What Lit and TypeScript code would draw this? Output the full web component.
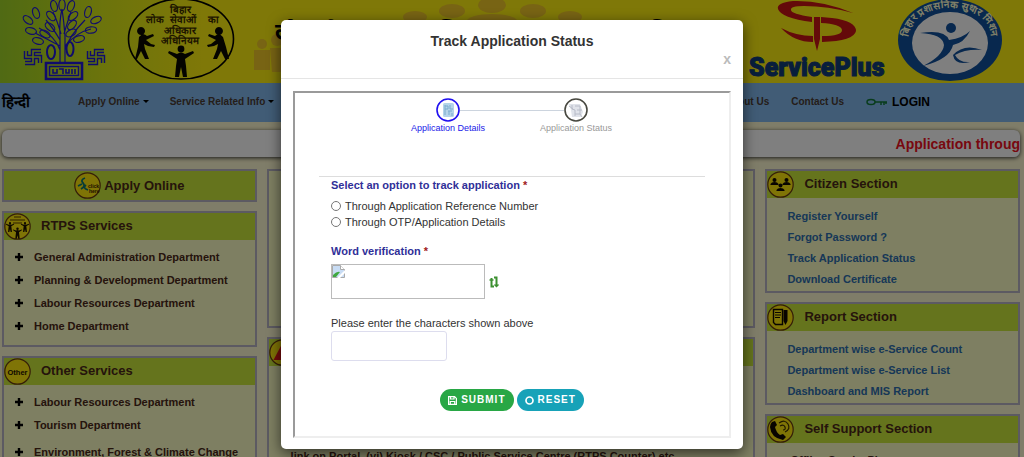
import { LitElement, html, css, svg } from "lit";
import { customElement } from "lit/decorators.js";

const leaf = (x: number, y: number, a: number) => svg`<ellipse cx=${x} cy=${y} rx="3.200" ry="5.600" transform=${`rotate(${a} ${x} ${y})`} />`;
const knot = "M5 51v6h14v6M20 51h-8v12H4M68 51v6h14v6M83 51h-8v12h-8";

const emblem = html`<svg class="emblem" viewBox="0 0 84 81" fill="none" stroke="#2018d8" stroke-width="1.200">
  <path d="M39 62V36Q38 22 41 9M44 62V36Q43 22 41 9M39 50Q34 36 18 28M39 46Q28 40 14 33M39 40Q32 28 25 20M44 50Q48 36 64 20M44 46Q56 32 70 29M40 34Q36 20 32 12M43 34Q47 20 50 12" />
  ${leaf(41, 5, 0)}${leaf(33, 6, -15)}${leaf(50, 6, 20)}${leaf(30, 16, -40)}${leaf(52, 16, 50)}
  ${leaf(15, 13, -20)}${leaf(67, 12, 15)}${leaf(7, 20, -50)}${leaf(75, 20, 65)}${leaf(10, 31, -75)}${leaf(70, 30, 85)}
  ${leaf(29, 27, -50)}${leaf(51, 25, 40)}${leaf(24, 34, -60)}${leaf(58, 39, 75)}${leaf(17, 41, -75)}${leaf(50, 33, 60)}
  <g stroke-width="2"><ellipse cx="30" cy="52" rx="4" ry="7" /><ellipse cx="49" cy="49" rx="3.500" ry="7" /></g>
  <path stroke-width="4.400" d=${knot} /><path stroke="#b4dc20" stroke-width="1.600" d=${knot} />
  <path stroke-width="2.600" d="M25 63h36v16H25z" /><path stroke-width="1.500" d="M28.500 66.500h29v9h-29z" /><path stroke-width="1.600" d="M32 69v4h4v-4M38 69h4v5M45 69v4h3v-4M51 69v5M54 69v5" />
</svg>`;

const figure = (x: number, y: number) => svg`<g transform=${`translate(${x} ${y})`}><circle r="3.400" cy="-12" /><path d="M-4-7Q0-10 4-7L12-10 13-8 4-2 5 5 6 16H2L0 6-2 16H-6L-5 5-4-2-13-8-12-10Z" /></g>`;

const rtpsLogo = html`<svg class="rtps" viewBox="0 0 108 84">
  <ellipse cx="54" cy="39" rx="52.500" ry="40" fill="none" stroke="#000" stroke-width="1.600" />
  <g fill="#3a2a00" font-size="10" font-weight="700" text-anchor="middle"><text x="53" y="13">बिहार</text><text x="19" y="23" text-anchor="start">लोक</text><text x="56" y="23">सेवाओं</text><text x="86" y="23">का</text><text x="53" y="34">अधिकार</text><text x="53" y="44">अधिनियम</text></g>
  <g fill="#0a0800"><path d="M14 35a4 4 0 1 1 .1 0M12 37q4-5 8-1l6-2 1 2-8 4 5 4 4 1-1 2-6-1-4-2 1 5 4 10h-4l-4-8-4 8H8l3-12z" /><path d="M92 35a4 4 0 1 0-.1 0M96 37q-4-5-8-1l-6-2-1 2 8 4-5 4-4 1 1 2 6-1 4-2-1 5-4 10h4l4-8 4 8h4l-3-12z" />${figure(54, 61)}</g>
</svg>`;

const spLogo = html`<svg class="sp" viewBox="0 0 142 80">
  <g fill="#c81414"><path d="M105 13Q74 0 45 1Q28 3 30 9Q33 18 64 22V17Q43 14 43 10Q42 6 56 6Q80 6 105 13Z" /><path d="M73 17L84 18Q108 21 108 31Q106 41 74 42V36Q94 36 94 30Q93 24 73 23Z" /><path d="M33 28Q48 36 65 36V42Q46 42 33 28ZM66 17h6v22l-3 12-3-12z" /></g>
  <text x="1" y="76" class="sptext">ServicePlus</text>
</svg>`;

const missionLogo = html`<svg class="mission" viewBox="0 0 106 82">
  <ellipse cx="53" cy="40" rx="52" ry="41" fill="#10509c" /><ellipse cx="53" cy="43" rx="38" ry="31" fill="#fff" />
  <path id="arc" d="M12 47C7 18 33 8 53 8S99 18 94 47" fill="none" />
  <text fill="#ffffd0" font-size="10" font-weight="700" text-anchor="middle"><textPath href="#arc" startOffset="50%">बिहार प्रशासनिक सुधार मिशन</textPath></text>
  <circle cx="54" cy="28" r="5" fill="#10509c" />
  <path fill="#10509c" d="M23 33Q48 29 52 40Q66 38 73 31Q67 43 56 45Q53 59 26 66Q46 56 47 45Q46 34 23 33ZM56 55Q67 43 85 50Q68 49 58 55Q62 63 73 62Q58 66 56 55Z" />
</svg>`;

const icons: Record<string, unknown> = {
  apply: svg`<path fill="none" stroke="#0c7870" stroke-width="1.800" d="M11 6q-5 2-2 5t-2 6M8 12l-4 2M12 13q-4 3 2 5"/><g fill="#402000" font-size="5" font-weight="700"><text x="14" y="16">click</text><text x="15" y="21">here</text></g>`,
  rtps: svg`<g fill="#1c1000"><g transform="translate(6 14) scale(.32)">${figure(0, 0)}</g><g transform="translate(21 14) scale(.32)">${figure(0, 0)}</g><g transform="translate(13.500 20) scale(.36)">${figure(0, 0)}</g></g><path d="M10 4h7M6 7h15M9 10h9" stroke="#5a3c00" stroke-width="1.200"/>`,
  other: svg`<text x="13.500" y="16.500" text-anchor="middle" font-size="7.500" font-weight="700" fill="#1c1000">Other</text>`,
  people: svg`<g fill="#100800"><circle cx="7.500" cy="9" r="2"/><path d="M3.500 14v-1q1-2 4-2t4 2v1z"/><circle cx="19.500" cy="9" r="2"/><path d="M15.500 14v-1q1-2 4-2t4 2v1z"/><circle cx="13.500" cy="14.500" r="2"/><path d="M9.500 20v-1q1-2 4-2t4 2v1z"/></g>`,
  report: svg`<path d="M6.500 5.500h9v15h-7l-2-2z" fill="none" stroke="#100800" stroke-width="1.400"/><path d="M8 8.500h6M8 11h6M8 13.500h5" stroke="#100800"/><path d="M16.500 6h4v11l-2 4-2-4z" fill="#100800"/>`,
  phone: svg`<path fill="#100800" d="M5 6l3-1 2 4-2 2q1 5 5 8l3-1 3 3-3 3Q4 22 3 11q0-3 2-5z"/><path d="M12 7q6-4 9 1t-3 8M13 10q4-2 5 1t-2 3" fill="none" stroke="#403000" stroke-width="1.200"/>`,
  alert: svg`<path fill="#e81818" d="M13.500 4l9 17h-18z"/>`,
};
const badge = (name: string) => html`<svg class="badge" viewBox="0 0 27 27"><circle cx="13.500" cy="13.500" r="12.700" fill="#ffe80c" stroke="#6a3c10" stroke-width="1.200" />${icons[name]}</svg>`;

const plus = html`<svg class="plus" viewBox="0 0 8 8"><path d="M4 0v8M0 4h8" stroke="#000" stroke-width="2.400" /></svg>`;

@customElement("app-root")
export class AppRoot extends LitElement {
  static styles = css`
    :host { display: block; position: relative; height: 100vh; overflow: hidden; background: #fffad2; font: 11px/16px "Liberation Sans", Arial, sans-serif; color: #333; }
    * { box-sizing: border-box; }
    a { color: inherit; text-decoration: none; }
    h1, h2, ul, p { margin: 0; padding: 0; font-size: inherit; }
    ul { list-style: none; }
    svg { flex: none; display: block; }
    .banner { display: flex; align-items: flex-start; height: 83px; overflow: hidden; padding: 0 20px; background: linear-gradient(90deg, #a0d428 0, #b4dc20 4%, #d8e818 10%, #fff010 20%); }
    .emblem { width: 86px; height: 81px; }
    .rtps { width: 108px; height: 84px; margin-left: 21px; }
    .title { flex: 1; min-width: 0; position: relative; height: 83px; padding: 12px 0 0 40px; font: 700 22px/40px "Liberation Sans", "Noto Sans", sans-serif; color: #000; white-space: nowrap; }
    .crowd { position: absolute; inset: 0; width: 100%; height: 100%; }
    .titletext { position: relative; }
    .sp { width: 142px; height: 80px; margin-right: 6px; }
    .sptext { font: 900 25px Roboto, sans-serif; fill: #103c78; stroke: #103c78; stroke-width: 1; }
    .mission { width: 108px; height: 82px; }
    .nav { display: flex; align-items: center; height: 39px; padding: 0 94px 2px 2px; background: #82b8ec; font-size: 10px; font-weight: 700; color: #4a3c34; }
    .hindi { width: 76px; font-size: 15px; color: #000; }
    .nav a { display: flex; align-items: center; }
    .drop { margin-right: 21px; }
    .drop::after { content: ""; margin-left: 3px; border: 3px solid transparent; border-top-color: #000; border-bottom: 0; }
    .spacer { flex: 1; }
    .about { margin-right: 22px; }
    .login { margin-left: 22px; gap: 4px; font-size: 12px; color: #000; }
    .key { width: 22px; height: 8px; }
    .notice { display: flex; justify-content: flex-end; height: 27px; margin: 8px 4px 12px 2px; background: #fff; border-radius: 6px; box-shadow: 0 1px 4px #333; overflow: hidden; font: 700 14px/28px "Liberation Sans", Arial, sans-serif; color: #f01020; white-space: nowrap; }
    .columns { display: grid; grid-template-columns: 25fr 48fr 25fr; gap: 10px; padding: 0 4px 0 2px; align-items: start; }
    .col { display: grid; gap: 9px; min-width: 0; }
    .panel { border: 2px solid #b9b4c4; background: #fcfec4; color: #4a2818; font-weight: 700; min-width: 0; }
    .panel h2 { display: flex; align-items: flex-start; gap: 10px; height: 27px; background: #cae83a; font-size: 13px; line-height: 25px; }
    .badge { width: 27px; height: 27px; }
    .apply { display: flex; align-items: center; justify-content: center; gap: 3px; height: 33px; border: 2px solid #b9b4c4; background: #cae83a; font-size: 13px; font-weight: 700; color: #4a2818; }
    .services { padding: 5px 0 8px 11px; }
    .services a { display: flex; align-items: center; gap: 11px; min-height: 23px; }
    .services .long { padding-top: 9px; align-items: flex-start; line-height: 14px; }
    .long .plus { margin-top: 3px; }
    .plus { width: 8px; height: 8px; }
    .links { padding: 8px 0 1px 20px; line-height: 21px; color: #2e6fae; }
    .offline { padding: 9px 14px; line-height: 16px; }
    .hero { height: 159px; }
    .news { padding: 82px 20px 20px 22px; }
    .backdrop { position: absolute; inset: 0; background: rgba(0, 0, 0, .5); }
    .dialog { width: 90%; max-width: 462px; margin: 20px auto; background: #fff; border-radius: 5px; box-shadow: 0 4px 14px rgba(0, 0, 0, .6); }
    .head { padding: 11px 12px; border-bottom: 1px solid #e5e5e5; display: flex; flex-direction: column; }
    .head h1 { text-align: center; font-size: 14px; line-height: 20px; }
    .close { align-self: flex-end; border: 0; padding: 0; background: none; font: 700 14px/16px "Liberation Sans", Arial, sans-serif; color: #bbb; }
    .content { padding: 12px 12px 11px; }
    .frame { border: 2px inset #eee; padding: 5px 24px 25px; }
    .steps { display: grid; grid-template-columns: 128px 128px; justify-content: center; font-size: 9px; line-height: 12px; text-align: center; color: #999; }
    .step { display: grid; justify-items: center; position: relative; }
    .step svg { width: 24px; height: 24px; position: relative; }
    .step + .step::before { content: ""; position: absolute; left: -52px; top: 12px; width: 104px; border-top: 1px solid #ccd4de; }
    .current { color: #2020e8; }
    .form { margin-top: 42px; border-top: 1px solid #ddd; padding: 0 12px; }
    .group { border: 0; margin: 0; padding: 0; }
    .lab { display: block; padding: 0; font-weight: 700; color: #303098; line-height: 16px; }
    .star { color: #a02020; }
    .radios { display: grid; padding: 5px 0 13px; }
    .radios label { display: flex; align-items: center; gap: 4px; }
    .radios input { margin: 0; width: 10px; height: 10px; }
    .captcha { display: flex; align-items: center; gap: 4px; margin: 5px 0 16px; }
    .image { width: 154px; height: 35px; border: 1px solid #bbb; }
    .refresh { border: 0; padding: 0; background: none; }
    .refresh svg { width: 10px; height: 12px; }
    .image svg { width: 13px; height: 13px; }
    .answer { display: block; width: 116px; height: 30px; border: 1px solid #dde; border-radius: 3px; }
    .actions { display: flex; justify-content: center; gap: 3px; margin-top: 28px; }
    .btn { display: flex; align-items: center; gap: 4px; height: 22px; padding: 0 8px; border: 0; border-radius: 11px; font: 700 10px/22px "Liberation Sans", Arial, sans-serif; letter-spacing: 1px; color: #fff; background: #28a745; }
    .reset { background: #17a2b8; }
    .btn svg { width: 9px; height: 9px; }
  `;

  panel(icon: string, title: string, body: unknown) {
    return html`<section class="panel"><h2>${badge(icon)}${title}</h2>${body}</section>`;
  }
  services(items: string[]) {
    return html`<ul class="services">${items.map((t) => html`<li><a href="#" class=${t.length > 36 ? "long" : ""}>${plus}<span>${t}</span></a></li>`)}</ul>`;
  }
  links(items: string[]) {
    return html`<ul class="links">${items.map((t) => html`<li><a href="#">${t}</a></li>`)}</ul>`;
  }

  render() {
    return html`
      <header class="banner">${emblem}${rtpsLogo}
        <div class="title">
          <svg class="crowd" viewBox="0 0 505 83" fill="#f0c828"><ellipse cx="213" cy="11" rx="13" ry="7" /><ellipse cx="253" cy="5" rx="14" ry="8" /><ellipse cx="294" cy="11" rx="13" ry="7" /><ellipse cx="176" cy="17" rx="12" ry="6" /><ellipse cx="331" cy="17" rx="12" ry="6" /><ellipse cx="253" cy="22" rx="26" ry="8" /><circle cx="23" cy="44" r="5" /><path d="M15 50h16v20H15z" /><circle cx="38" cy="40" r="6" /><path d="M31 48h18v24H33z" /></svg>
          <span class="titletext">लोक सेवाओं का अधिकार, सामान्य प्रशासन विभाग</span>
        </div>${spLogo}${missionLogo}
      </header>
      <nav class="nav">
        <a class="hindi" href="#">हिन्दी</a><a class="drop" href="#">Apply Online</a><a class="drop" href="#">Service Related Info</a>
        <span class="spacer"></span><a class="about" href="#">About Us</a><a href="#">Contact Us</a>
        <a class="login" href="#"><svg class="key" viewBox="0 0 22 8" fill="none" stroke="#107838" stroke-width="1.500"><ellipse cx="5" cy="4" rx="4" ry="2.500" /><path d="M9 4h12M15 4v3M18 4v3M20 4v2" /></svg>LOGIN</a>
      </nav>
      <div class="notice">Application throug</div>
      <main class="columns">
        <div class="col">
          <a class="apply" href="#">${badge("apply")}Apply Online</a>
          ${this.panel("rtps", "RTPS Services", this.services(["General Administration Department", "Planning & Development Department", "Labour Resources Department", "Home Department"]))}
          ${this.panel("other", "Other Services", this.services(["Labour Resources Department", "Tourism Department", "Environment, Forest & Climate Change Department"]))}
        </div>
        <div class="col">
          <section class="panel hero"></section>
          ${this.panel("alert", "", html`<p class="news">link on Portal, (vi) Kiosk / CSC / Public Service Centre (RTPS Counter) etc.</p>`)}
        </div>
        <div class="col">
          ${this.panel("people", "Citizen Section", this.links(["Register Yourself", "Forgot Password ?", "Track Application Status", "Download Certificate"]))}
          ${this.panel("report", "Report Section", this.links(["Department wise e-Service Count", "Department wise e-Service List", "Dashboard and MIS Report"]))}
          ${this.panel("phone", "Self Support Section", html`<p class="offline">▴ Offline ServicePlus</p>`)}
        </div>
      </main>
      <div class="backdrop">
        <div class="dialog" role="dialog" aria-labelledby="heading">
          <div class="head"><h1 id="heading">Track Application Status</h1><button class="close">x</button></div>
          <div class="content"><div class="frame">
            <div class="steps">
              <div class="step current"><svg viewBox="0 0 24 24"><circle cx="12" cy="12" r="11" fill="#fff" stroke="#2010f0" stroke-width="1.600" /><rect x="7" y="5" width="11" height="14" rx="1.500" fill="#b4d4ea" /><path d="M9 7v10M9 8h3v3H9M14 7v4h3M12 13h4M13 13v4M16 15v3" fill="none" stroke="#7aaccc" /></svg>Application Details</div>
              <div class="step"><svg viewBox="0 0 24 24"><circle cx="12" cy="12" r="11" fill="#fff" stroke="#484840" stroke-width="1.600" /><path d="M5 6h11l3 8-2 5H8l-1-7z" fill="#e0e3ea" /><path d="M8 7v4l3 1v6M11 8h5v8h-5M13 12h5M5 8l4 3M16 16l2 3" fill="none" stroke="#b8bcc8" /></svg>Application Status</div>
            </div>
            <form class="form" @submit=${(e: Event) => e.preventDefault()}>
              <fieldset class="group"><legend class="lab">Select an option to track application <span class="star">*</span></legend>
                <div class="radios"><label><input type="radio" name="by" />Through Application Reference Number</label><label><input type="radio" name="by" />Through OTP/Application Details</label></div>
              </fieldset>
              <div class="lab">Word verification <span class="star">*</span></div>
              <div class="captcha">
                <div class="image"><svg viewBox="0 0 13 13"><path d="M.5 .5h8l4 4v8H.500z" fill="#c8dcf4" stroke="#aaa" /><path d="M8.500 .5v4h4" fill="#fff" stroke="#aaa" /><path d="M1 12V10q4-4 7-3L4 12z" fill="#40a840" /><path d="M5 13l8-8v3l-5 5z" fill="#fff" /></svg></div>
                <button type="button" class="refresh" aria-label="Refresh"><svg viewBox="0 0 10 12" fill="none" stroke="#3c9030" stroke-width="2"><path d="M5 10.500H2.500V2M5 1.500h2.500V10" /><path stroke-width="1.500" d="M.5 4h4M5.500 8.500l2 2 2-2" /></svg></button>
              </div>
              <label for="answer">Please enter the characters shown above</label>
              <input class="answer" id="answer" type="text" />
              <div class="actions">
                <button class="btn"><svg viewBox="0 0 9 9" fill="none" stroke="#fff" stroke-width="1.200"><path d="M.6 .6h6l1.800 1.800v6H.6zM2.500 .6v2.400h3.500V.6M2.300 8.400V5.500h4.400v2.900" /></svg>SUBMIT</button>
                <button type="reset" class="btn reset"><svg viewBox="0 0 9 9"><circle cx="4.500" cy="4.500" r="3.500" fill="none" stroke="#fff" stroke-width="1.700" /></svg>RESET</button>
              </div>
            </form>
          </div></div>
        </div>
      </div>`;
  }
}
